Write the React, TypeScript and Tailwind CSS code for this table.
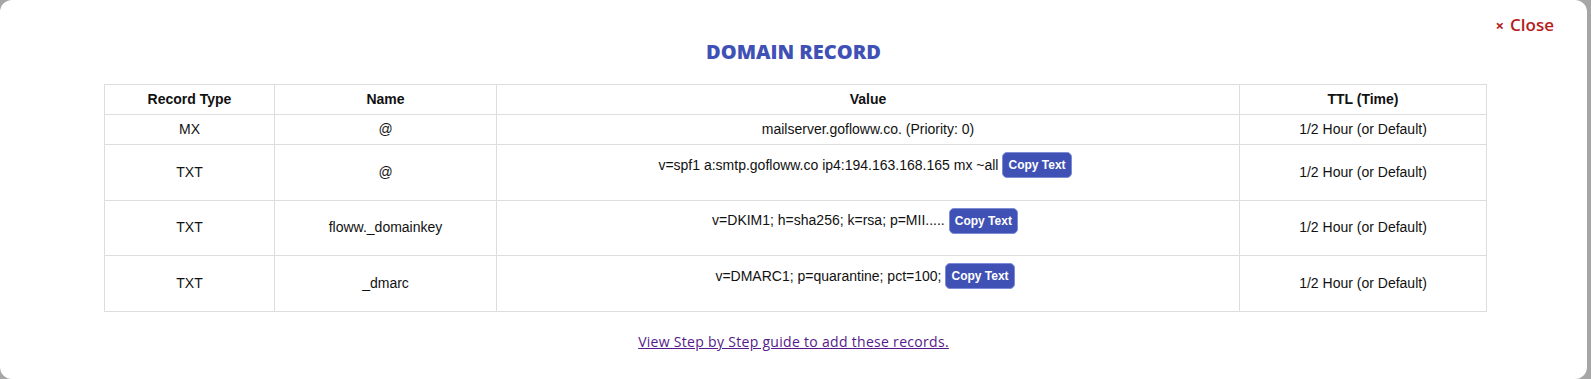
import React from "react";

const rows = [
  { type: "MX", name: "@", value: "mailserver.gofloww.co. (Priority: 0)", copy: false },
  { type: "TXT", name: "@", value: "v=spf1 a:smtp.gofloww.co ip4:194.163.168.165 mx ~all", copy: true },
  { type: "TXT", name: "floww._domainkey", value: "v=DKIM1; h=sha256; k=rsa; p=MII.....", copy: true },
  { type: "TXT", name: "_dmarc", value: "v=DMARC1; p=quarantine; pct=100;", copy: true },
];

export default function App() {
  return (
    <div className="min-h-screen w-full bg-[#a6a6a6]">
      <div className="w-[1587px] h-[379px] bg-white rounded-[12px] pt-[13px] flex flex-col">
        <div className="flex justify-end pr-[33px]">
          <button className="text-[#b71c1c] text-[17px] leading-[24px] font-semibold flex items-center gap-[6px] font-['Open_Sans',sans-serif]">
            <span className="text-[15px] font-bold">×</span>
            <span>Close</span>
          </button>
        </div>
        <h2 className="text-center text-[#3f51b5] text-[20px] leading-[28px] font-extrabold mt-[1px] font-['Open_Sans',sans-serif]">
          DOMAIN RECORD
        </h2>
        <table className="ml-[104px] mt-[18px] w-[1382px] border-collapse text-[14px] text-[#111] font-['Liberation_Sans',Arial,sans-serif] table-fixed">
          <colgroup>
            <col className="w-[170px]" />
            <col className="w-[222px]" />
            <col className="w-[743px]" />
            <col className="w-[247px]" />
          </colgroup>
          <thead>
            <tr className="h-[30px]">
              <th className="border border-[#dddddd] font-bold text-center align-middle">Record Type</th>
              <th className="border border-[#dddddd] font-bold text-center align-middle">Name</th>
              <th className="border border-[#dddddd] font-bold text-center align-middle">Value</th>
              <th className="border border-[#dddddd] font-bold text-center align-middle">TTL (Time)</th>
            </tr>
          </thead>
          <tbody>
            {rows.map((r, i) => (
              <tr key={i} className={r.copy ? "h-[55.6px]" : "h-[30px]"}>
                <td className="border border-[#dddddd] text-center align-middle">{r.type}</td>
                <td className="border border-[#dddddd] text-center align-middle">{r.name}</td>
                <td className="border border-[#dddddd] text-center align-middle">
                  {r.copy ? (
                    <div className="flex items-center justify-center pb-[14px] pr-[6px]">
                      <span>{r.value}</span>
                      <button className="ml-[4px] h-[26px] px-[5px] rounded-[5px] bg-[#3f51b5] border border-[#7d8cd4] text-white text-[12px] font-bold leading-none">
                        Copy Text
                      </button>
                    </div>
                  ) : (
                    <span>{r.value}</span>
                  )}
                </td>
                <td className="border border-[#dddddd] text-center align-middle">1/2 Hour (or Default)</td>
              </tr>
            ))}
          </tbody>
        </table>
        <div className="text-center mt-[17px]">
          <a href="#" className="text-[#551a8b] underline text-[14px] leading-[18px] tracking-[0.3px] font-['Open_Sans',sans-serif]">
            View Step by Step guide to add these records.
          </a>
        </div>
      </div>
    </div>
  );
}
